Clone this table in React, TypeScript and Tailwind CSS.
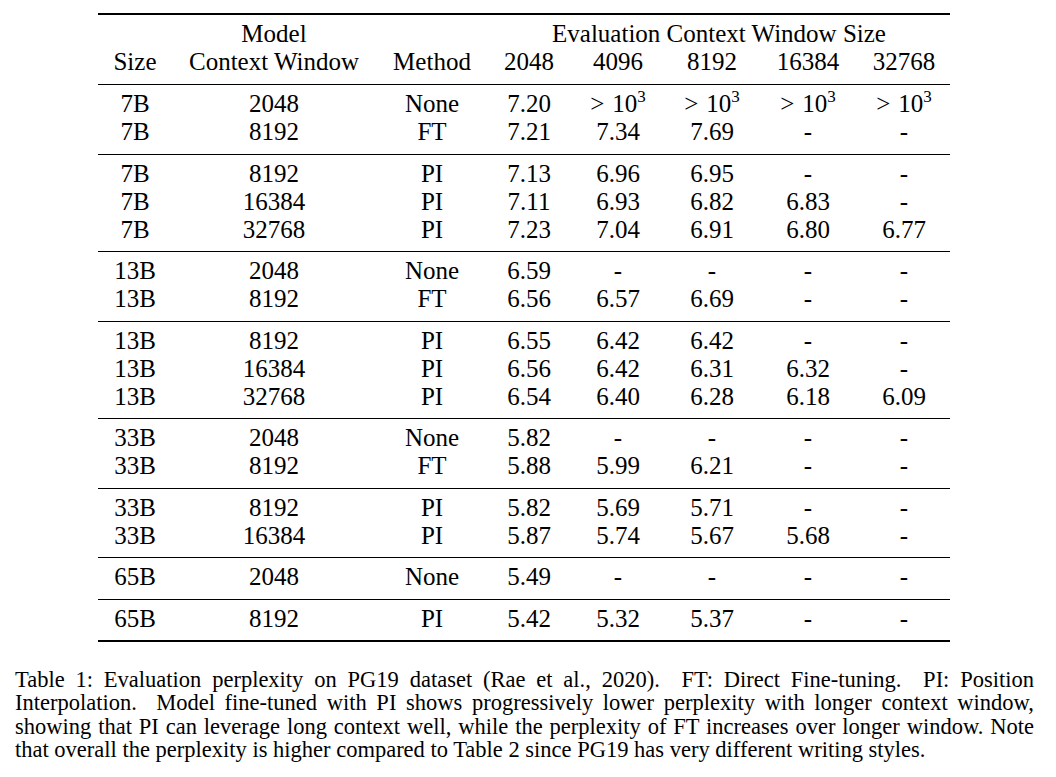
import React from 'react';

const cols = 'grid grid-cols-[74px_204px_112px_82px_96px_92px_100px_92px] text-center';

type Row = [string, string, string, ...React.ReactNode[]];

const Big = () => (
  <span className="whitespace-nowrap">
    &gt;<span className="ml-[8px]">10</span>
    <span className="relative -top-[10px] text-[17px] leading-none">3</span>
  </span>
);

const groups: Row[][] = [
  [
    ['7B', '2048', 'None', '7.20', <Big />, <Big />, <Big />, <Big />],
    ['7B', '8192', 'FT', '7.21', '7.34', '7.69', '-', '-'],
  ],
  [
    ['7B', '8192', 'PI', '7.13', '6.96', '6.95', '-', '-'],
    ['7B', '16384', 'PI', '7.11', '6.93', '6.82', '6.83', '-'],
    ['7B', '32768', 'PI', '7.23', '7.04', '6.91', '6.80', '6.77'],
  ],
  [
    ['13B', '2048', 'None', '6.59', '-', '-', '-', '-'],
    ['13B', '8192', 'FT', '6.56', '6.57', '6.69', '-', '-'],
  ],
  [
    ['13B', '8192', 'PI', '6.55', '6.42', '6.42', '-', '-'],
    ['13B', '16384', 'PI', '6.56', '6.42', '6.31', '6.32', '-'],
    ['13B', '32768', 'PI', '6.54', '6.40', '6.28', '6.18', '6.09'],
  ],
  [
    ['33B', '2048', 'None', '5.82', '-', '-', '-', '-'],
    ['33B', '8192', 'FT', '5.88', '5.99', '6.21', '-', '-'],
  ],
  [
    ['33B', '8192', 'PI', '5.82', '5.69', '5.71', '-', '-'],
    ['33B', '16384', 'PI', '5.87', '5.74', '5.67', '5.68', '-'],
  ],
  [['65B', '2048', 'None', '5.49', '-', '-', '-', '-']],
  [['65B', '8192', 'PI', '5.42', '5.32', '5.37', '-', '-']],
];

const captionLines = [
  'Table 1: Evaluation perplexity on PG19 dataset (Rae et al., 2020).\u00a0 FT: Direct Fine-tuning.\u00a0 PI: Position',
  'Interpolation.\u00a0 Model fine-tuned with PI shows progressively lower perplexity with longer context window,',
  'showing that PI can leverage long context well, while the perplexity of FT increases over longer window. Note',
];

export default function App() {
  return (
    <main className="min-h-screen w-[1056px] bg-white text-black font-['Liberation_Serif',serif] pt-[13px]">
      <div className="ml-[98px] w-[852px] border-y-2 border-black text-[25px] leading-[28px]">
        <div className="border-b border-black pt-[5px] pb-[8px]">
          <div className={cols}>
            <div />
            <div>Model</div>
            <div />
            <div className="col-span-5">Evaluation Context Window Size</div>
          </div>
          <div className={cols}>
            <div>Size</div>
            <div>Context Window</div>
            <div>Method</div>
            <div>2048</div>
            <div>4096</div>
            <div>8192</div>
            <div>16384</div>
            <div>32768</div>
          </div>
        </div>
        {groups.map((g, gi) => (
          <div
            key={gi}
            className={
              gi < groups.length - 1
                ? 'border-b border-black pt-[5px] pb-[7.5px]'
                : 'pt-[5px] pb-[7px]'
            }
          >
            {g.map((r, ri) => (
              <div key={ri} className={cols}>
                {r.map((c, ci) => (
                  <div key={ci}>{c}</div>
                ))}
              </div>
            ))}
          </div>
        ))}
      </div>

      <div className="mt-[26px] ml-[15px] w-[1019px] text-[22.5px] leading-[23.5px]">
        {captionLines.map((l, i) => (
          <div key={i} className="text-justify [text-align-last:justify] whitespace-nowrap">
            {l}
          </div>
        ))}
        <div className="whitespace-nowrap">
          that overall the perplexity is higher compared to Table 2 since PG19 has very different writing styles.
        </div>
      </div>
    </main>
  );
}
